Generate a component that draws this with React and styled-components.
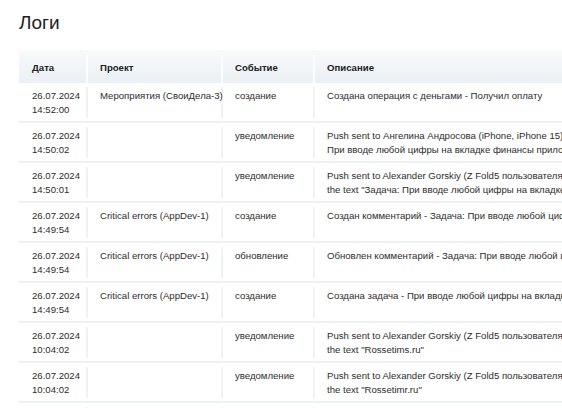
import styled, { createGlobalStyle } from "styled-components";

const GlobalStyle = createGlobalStyle`
  html, body {
    margin: 0;
    padding: 0;
    background: #fff;
    overflow: hidden;
  }
  body {
    font-family: "Liberation Sans", Arial, sans-serif;
    color: #2d2d2d;
  }
`;

const Page = styled.div`
  padding: 11px 0 0 19px;
  width: 800px;
`;

const Title = styled.h1`
  margin: 0 0 15px;
  font-size: 19px;
  font-weight: 400;
  line-height: 24px;
  color: #222;
`;

const StyledTable = styled.table`
  border-collapse: collapse;
  border-spacing: 0;
  table-layout: fixed;
  width: 760px;
  font-size: 9.6px;
  line-height: 14px;
`;

const HeadRow = styled.tr`
  background: linear-gradient(to bottom, #f8fafb 0%, #eaf0f4 100%);
  height: 33px;

  th:first-child {
    border-top-left-radius: 4px;
  }
`;

const HeadCell = styled.th`
  width: ${(p) => p.$w}px;
  padding: 5px 0 0;
  text-align: left;
  vertical-align: top;
  font-weight: 700;
  color: #222;
`;

const HeadInner = styled.div`
  height: 28px;
  box-sizing: border-box;
  padding: 6px 0 0 ${(p) => (p.$first ? 13 : 12)}px;
  border-left: ${(p) => (p.$first ? "none" : "2px solid rgba(255,255,255,0.8)")};
`;

const Row = styled.tr`
  border-bottom: 2px solid #eef1f4;
`;

const Cell = styled.td`
  padding: 4px 0 3px;
  vertical-align: top;
`;

const CellInner = styled.div`
  box-sizing: border-box;
  height: 31px;
  padding: 2px 0 0 ${(p) => (p.$first ? 13 : 12)}px;
  border-left: ${(p) => (p.$first ? "none" : "2px solid #eff1f3")};
  white-space: ${(p) => (p.$nowrap ? "nowrap" : "normal")};
`;

const columns = [
  { title: "Дата", w: 67 },
  { title: "Проект", w: 135 },
  { title: "Событие", w: 92 },
  { title: "Описание", w: 466 },
];

const logs = [
  ["26.07.2024", "14:52:00", "Мероприятия (СвоиДела-3)", "создание", ["Создана операция с деньгами - Получил оплату"]],
  ["26.07.2024", "14:50:02", "", "уведомление", ["Push sent to Ангелина Андросова (iPhone, iPhone 15), with the text", "При вводе любой цифры на вкладке финансы приложение вылетает"]],
  ["26.07.2024", "14:50:01", "", "уведомление", ["Push sent to Alexander Gorskiy (Z Fold5 пользователя Alexander) with", "the text \"Задача: При вводе любой цифры на вкладке финансы\""]],
  ["26.07.2024", "14:49:54", "Critical errors (AppDev-1)", "создание", ["Создан комментарий - Задача: При вводе любой цифры на вкладке"]],
  ["26.07.2024", "14:49:54", "Critical errors (AppDev-1)", "обновление", ["Обновлен комментарий - Задача: При вводе любой цифры на вкладке"]],
  ["26.07.2024", "14:49:54", "Critical errors (AppDev-1)", "создание", ["Создана задача - При вводе любой цифры на вкладке финансы"]],
  ["26.07.2024", "10:04:02", "", "уведомление", ["Push sent to Alexander Gorskiy (Z Fold5 пользователя Alexander) with", "the text \"Rossetims.ru\""]],
  ["26.07.2024", "10:04:02", "", "уведомление", ["Push sent to Alexander Gorskiy (Z Fold5 пользователя Alexander) with", "the text \"Rossetimr.ru\""]],
  ["26.07.2024", "10:03:40", "", "уведомление", ["Push sent to Alexander Gorskiy (Z Fold5 пользователя Alexander) with"]],
];

export default function App() {
  return (
    <>
      <GlobalStyle />
      <Page>
        <Title>Логи</Title>
        <StyledTable>
          <thead>
            <HeadRow>
              {columns.map((c, i) => (
                <HeadCell key={c.title} $w={c.w}>
                  <HeadInner $first={i === 0}>{c.title}</HeadInner>
                </HeadCell>
              ))}
            </HeadRow>
          </thead>
          <tbody>
            {logs.map(([date, time, project, event, desc], i) => (
              <Row key={i}>
                <Cell>
                  <CellInner $first>
                    {date}
                    <br />
                    {time}
                  </CellInner>
                </Cell>
                <Cell>
                  <CellInner $nowrap>{project}</CellInner>
                </Cell>
                <Cell>
                  <CellInner>{event}</CellInner>
                </Cell>
                <Cell>
                  <CellInner $nowrap>
                    {desc.map((line, j) => (
                      <div key={j}>{line}</div>
                    ))}
                  </CellInner>
                </Cell>
              </Row>
            ))}
          </tbody>
        </StyledTable>
      </Page>
    </>
  );
}
